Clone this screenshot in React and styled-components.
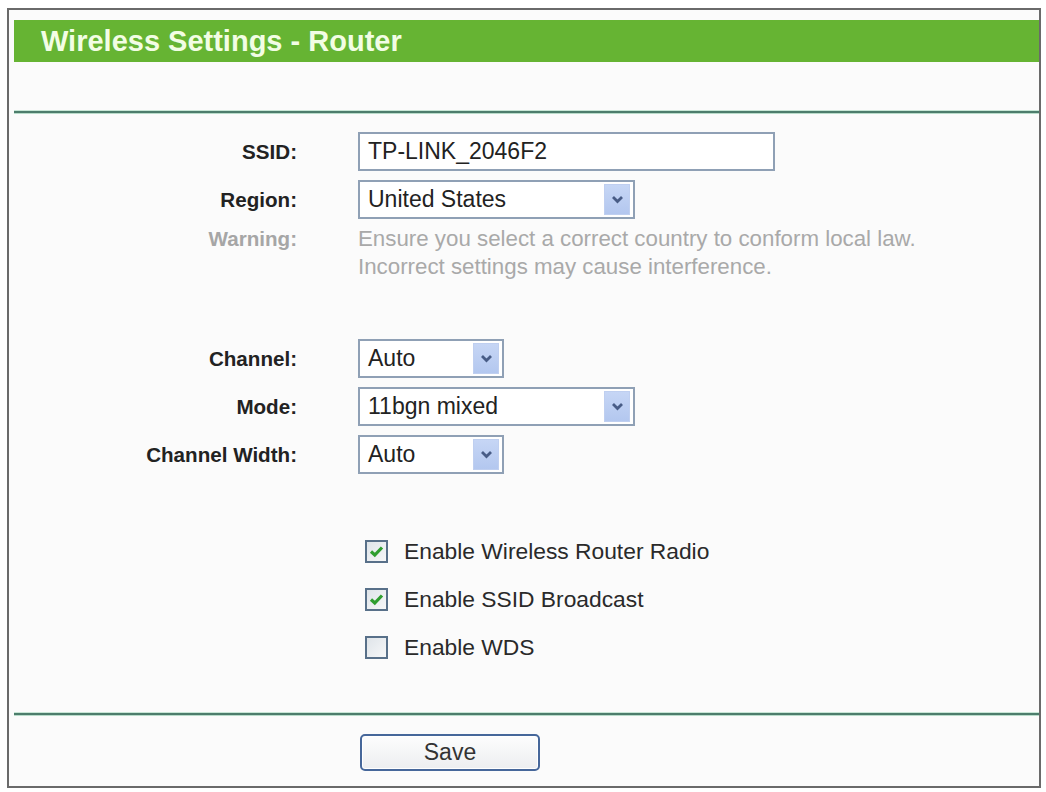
import React from "react";
import styled, { createGlobalStyle } from "styled-components";

const Global = createGlobalStyle`
  html, body { margin: 0; padding: 0; background: #ffffff; }
  body { font-family: "Liberation Sans", Arial, sans-serif; }
  * { box-sizing: border-box; }
`;

const Panel = styled.div`
  margin: 8px 0 0 7px;
  width: 1034px;
  height: 780px;
  border: 2px solid #6a6a6a;
  background: #fbfbfb;
  padding: 10px 0 0 5px;
  display: flex;
  flex-direction: column;
`;

const Header = styled.div`
  height: 42px;
  background: #66b433;
  color: #f2fde4;
  font-weight: bold;
  font-size: 29px;
  line-height: 42px;
  padding-left: 27px;
  margin-bottom: 49px;
`;

const Divider = styled.div`
  height: 2px;
  background: #4d7d6c;
  box-shadow: 0 1px 0 #b9dcca, 0 -1px 0 #c8e6d6;
  margin-top: ${(p) => p.$top || 0}px;
`;

const Form = styled.div`
  display: flex;
  flex-direction: column;
  padding-top: 19px;
`;

const Row = styled.div`
  display: grid;
  grid-template-columns: 283px 1fr;
  column-gap: 61px;
  align-items: ${(p) => (p.$top ? "start" : "center")};
  margin-top: ${(p) => p.$mt || 0}px;
`;

const Label = styled.div`
  text-align: right;
  font-weight: bold;
  font-size: 20.6px;
  color: ${(p) => (p.$muted ? "#a6a6a6" : "#222222")};
  line-height: ${(p) => (p.$lh ? p.$lh + "px" : "normal")};
`;

const Field = styled.div`
  width: ${(p) => p.$w}px;
  height: 39px;
  border: 2px solid #8fa0b5;
  background: #ffffff;
  display: flex;
  align-items: center;
  padding: 0 3px 0 8px;
  font-size: 23px;
  color: #222222;
`;

const FieldText = styled.span`
  flex: 1;
  white-space: nowrap;
`;

const ArrowBox = styled.div`
  width: 26px;
  height: 31px;
  background: linear-gradient(#c6d6f5, #b3c7ef);
  border: 1px solid #bfcff0;
  display: flex;
  align-items: center;
  justify-content: center;
`;

const Warning = styled.div`
  font-size: 22.3px;
  line-height: 28px;
  color: #a9a9a9;
`;

const CheckRow = styled.div`
  display: flex;
  align-items: center;
  margin-left: 7px;
  font-size: 22.8px;
  color: #2a2a2a;
  gap: 16px;
  height: 26px;
`;

const Box = styled.div`
  width: 23px;
  height: 23px;
  border: 2px solid #587089;
  background: linear-gradient(135deg, #dfe4e9, #f6f7f8);
  display: flex;
  align-items: center;
  justify-content: center;
`;

const SaveButton = styled.button`
  margin-left: 2px;
  width: 180px;
  height: 37px;
  border: 2px solid #46679a;
  border-radius: 5px;
  background: linear-gradient(#fdfdfd, #eceef0);
  box-shadow: inset 0 0 0 1px #ffffff;
  font-family: "Liberation Sans", Arial, sans-serif;
  font-size: 23px;
  color: #333333;
  padding: 0;
`;

const Chevron = () => (
  <svg width="13" height="9" viewBox="0 0 13 9">
    <path d="M2 2 L6.5 6.5 L11 2" fill="none" stroke="#485c86" strokeWidth="2.8" />
  </svg>
);

const Tick = () => (
  <svg width="15" height="13" viewBox="0 0 15 13">
    <path d="M2 6.5 L5.8 10 L13 2.5" fill="none" stroke="#2f9e2f" strokeWidth="3.2" />
  </svg>
);

const Select = ({ w, value }) => (
  <Field $w={w}>
    <FieldText>{value}</FieldText>
    <ArrowBox>
      <Chevron />
    </ArrowBox>
  </Field>
);

const Check = ({ checked, label, mt }) => (
  <Row $mt={mt}>
    <div />
    <CheckRow>
      <Box>{checked && <Tick />}</Box>
      <span>{label}</span>
    </CheckRow>
  </Row>
);

export default function App() {
  return (
    <>
      <Global />
      <Panel>
        <Header>Wireless Settings - Router</Header>
        <Divider />
        <Form>
          <Row>
            <Label>SSID:</Label>
            <Field $w={417}>
              <FieldText>TP-LINK_2046F2</FieldText>
            </Field>
          </Row>
          <Row $mt={9}>
            <Label>Region:</Label>
            <Select w={277} value="United States" />
          </Row>
          <Row $mt={6} $top>
            <Label $muted $lh={28}>Warning:</Label>
            <Warning>
              Ensure you select a correct country to conform local law.
              <br />
              Incorrect settings may cause interference.
            </Warning>
          </Row>
          <Row $mt={58}>
            <Label>Channel:</Label>
            <Select w={146} value="Auto" />
          </Row>
          <Row $mt={9}>
            <Label>Mode:</Label>
            <Select w={277} value="11bgn mixed" />
          </Row>
          <Row $mt={9}>
            <Label>Channel Width:</Label>
            <Select w={146} value="Auto" />
          </Row>
          <Check mt={64} checked label="Enable Wireless Router Radio" />
          <Check mt={22} checked label="Enable SSID Broadcast" />
          <Check mt={22} label="Enable WDS" />
        </Form>
        <Divider $top={53} />
        <Row $mt={19}>
          <div />
          <SaveButton>Save</SaveButton>
        </Row>
      </Panel>
    </>
  );
}
